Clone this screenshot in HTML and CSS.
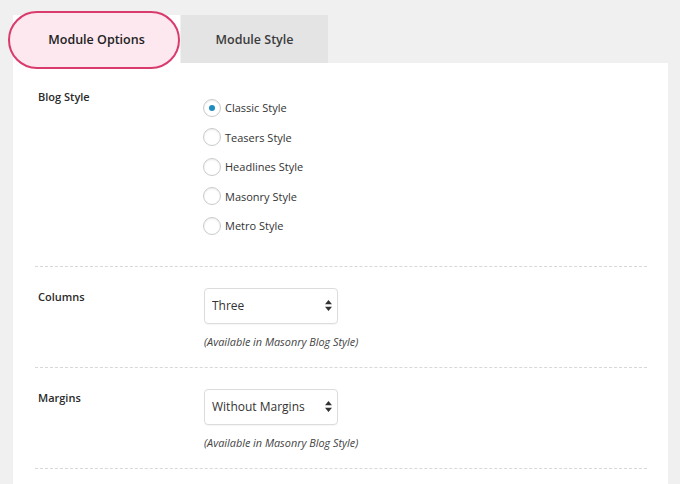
FILE: index.html
```html
<!DOCTYPE html>
<html>
<head>
<meta charset="utf-8">
<link rel="stylesheet" href="styles.css">
</head>
<body>
<div class="page">
  <div class="tabs">
    <div class="tab tab-active"><span class="tab-label">Module Options</span></div>
    <div class="tab">Module Style</div>
  </div>
  <div class="panel">
    <div class="row row-first">
      <div class="label">Blog Style</div>
      <div class="control">
        <div class="radios">
          <div class="radio-row"><span class="radio checked"></span><span>Classic Style</span></div>
          <div class="radio-row"><span class="radio"></span><span>Teasers Style</span></div>
          <div class="radio-row"><span class="radio"></span><span>Headlines Style</span></div>
          <div class="radio-row"><span class="radio"></span><span>Masonry Style</span></div>
          <div class="radio-row"><span class="radio"></span><span>Metro Style</span></div>
        </div>
      </div>
    </div>
    <div class="row">
      <div class="label">Columns</div>
      <div class="control">
        <div class="select"><span>Three</span>
          <svg class="arrows" width="7" height="11" viewBox="0 0 7 11"><path d="M3.5 0 L7 4.2 L0 4.2 Z M0 6.8 L7 6.8 L3.5 11 Z" fill="#333"/></svg>
        </div>
        <div class="hint">(Available in Masonry Blog Style)</div>
      </div>
    </div>
    <div class="row">
      <div class="label">Margins</div>
      <div class="control">
        <div class="select"><span>Without Margins</span>
          <svg class="arrows" width="7" height="11" viewBox="0 0 7 11"><path d="M3.5 0 L7 4.2 L0 4.2 Z M0 6.8 L7 6.8 L3.5 11 Z" fill="#333"/></svg>
        </div>
        <div class="hint">(Available in Masonry Blog Style)</div>
      </div>
    </div>
    <div class="row row-empty"></div>
  </div>
</div>
</body>
</html>
```

FILE: styles.css
```css
html, body {
  margin: 0;
  padding: 0;
  background: #f0f0f0;
  font-family: "Open Sans", "Liberation Sans", sans-serif;
  color: #333;
}

.page {
  padding: 15px 12px 0 13px;
}

.tabs {
  display: flex;
  gap: 1px;
  height: 48px;
}

.tab {
  height: 48px;
  width: 147px;
  background: #e4e4e4;
  display: flex;
  align-items: center;
  justify-content: center;
  font-size: 12.5px;
  font-weight: 600;
  color: #3c3c3c;
}

.tab-active {
  width: 167px;
  background: #fff;
  position: relative;
  color: #222;
}

.tab-active::before {
  content: "";
  position: absolute;
  left: -5px;
  right: 0;
  top: -4px;
  bottom: -6px;
  border: 2px solid #d93b6d;
  border-radius: 30px;
  background: #fde8ef;
  box-sizing: border-box;
}

.tab-label {
  position: relative;
}

.panel {
  background: #fff;
  padding: 0 21px 0 22px;
  height: 421px;
}

.row {
  display: grid;
  grid-template-columns: 169px 1fr;
  padding: 21px 0 17px;
  border-bottom: 1px dashed #d8d8d8;
}

.row-first {
  padding: 25px 0 25px;
}

.row-empty {
  border-bottom: none;
}

.label {
  padding-left: 3px;
  font-size: 11px;
  font-weight: 600;
  line-height: 18px;
  color: #2a2a2a;
}

.radios {
  margin-top: 5px;
  margin-left: -1px;
}

.radio-row {
  height: 29.5px;
  display: flex;
  align-items: center;
  gap: 4px;
  font-size: 11px;
  color: #333;
}

.radio {
  width: 18px;
  height: 18px;
  box-sizing: border-box;
  border-radius: 50%;
  border: 1px solid #c8cbce;
  background: #fff;
  box-shadow: inset 0 1px 2px rgba(0, 0, 0, 0.08);
  display: flex;
  align-items: center;
  justify-content: center;
}

.radio.checked::after {
  content: "";
  width: 6px;
  height: 6px;
  border-radius: 50%;
  background: #1e8cbe;
}

.select {
  width: 134px;
  height: 36px;
  box-sizing: border-box;
  border: 1px solid #dcdcdc;
  border-radius: 4px;
  display: flex;
  align-items: center;
  justify-content: space-between;
  padding: 0 5px 0 7px;
  font-size: 12px;
  color: #333;
  box-shadow: 0 1px 1px rgba(0, 0, 0, 0.04);
}

.hint {
  margin-top: 10px;
  font-size: 10.85px;
  font-style: italic;
  line-height: 16px;
  color: #444;
}
```
